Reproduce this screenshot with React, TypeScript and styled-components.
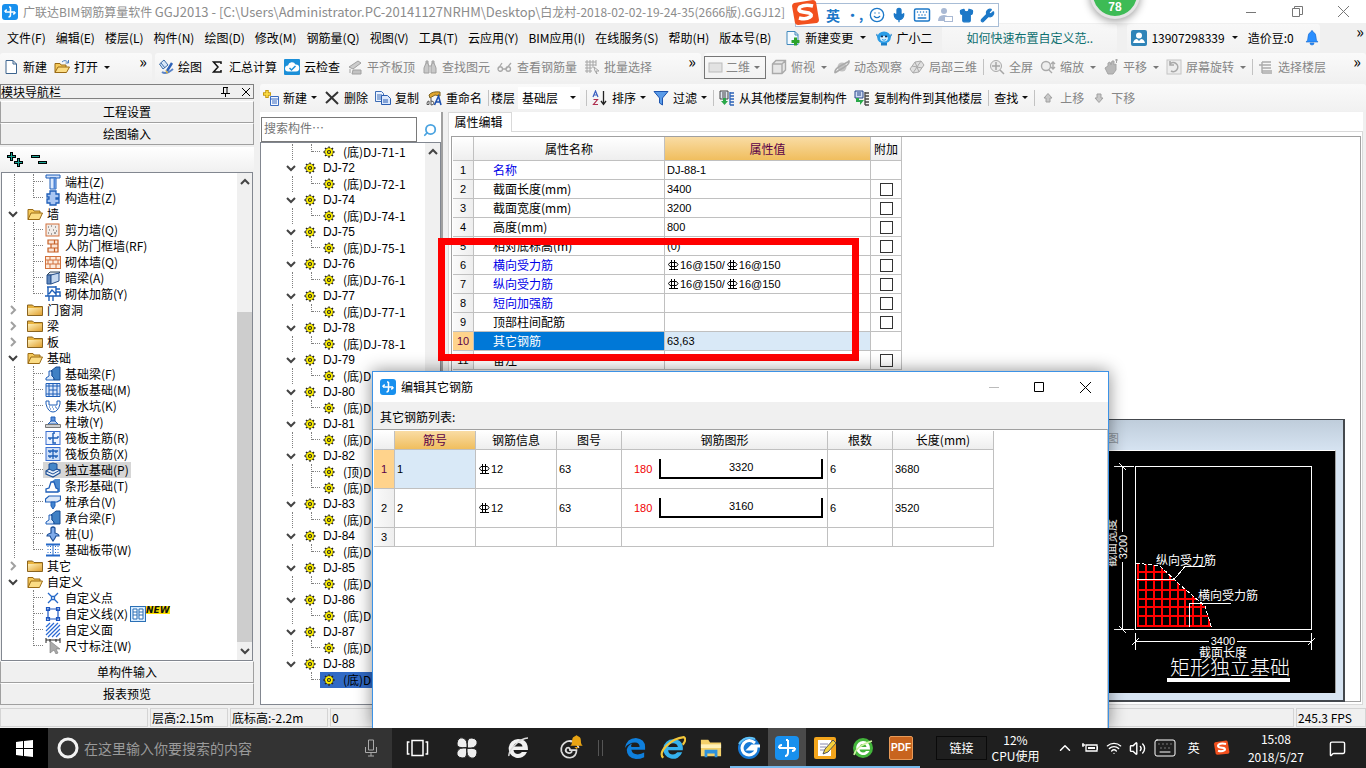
import React from "react";
import styled, { createGlobalStyle, css } from "styled-components";
import { Smile, Mic, Keyboard, Shirt, Wrench, Wifi, Volume2, MessageSquare, ChevronUp, Search } from "lucide-react";

const ui = `"Noto Sans CJK SC", sans-serif`;
const latin = `"Liberation Sans", "Noto Sans CJK SC", sans-serif`;

const GlobalStyle = createGlobalStyle`
  * { box-sizing: border-box; }
  body { margin: 0; background: #f0f0f0; font: 12px/16px ${ui}; color: #000; overflow: hidden; }
  button, input, select { font: inherit; color: inherit; margin: 0; padding: 0; border: 0; background: none; border-radius: 0; }
  svg { display: block; flex: none; }
`;

/* ---------- icons ---------- */

const B = "#1f5fb8";
const glyphs: Record<string, React.ReactNode> = {
  app: (<><rect width="16" height="16" rx="3" fill="#1890ee" /><path d="M8.5 3v7.5q0 2.5-2 2.5M3 8h10M8.5 3H7M3 8q0-2 2-2M13 8q0 2-2 2" fill="none" stroke="#fff" strokeWidth="1.5" /></>),
  page: <path d="M3 1.5h7l3.5 3.5v9.5H3zM10 1.5V5h3.5" fill="#fff" stroke="#3d648f" />,
  folderOpen: (<><path d="M1 13.5V3.5h5l1 1.5h6v2" fill="#f5c95a" stroke="#9a6a14" /><path d="M1 13.5 4 7h11.5l-3 6.5z" fill="#fbdc84" stroke="#9a6a14" /></>),
  folderArrow: (<><path d="M1 13.5V4.5h5l1 1.5h5v2" fill="#f5c95a" stroke="#9a6a14" /><path d="M1 13.5 4 8h11.5l-3 5.5z" fill="#fbdc84" stroke="#9a6a14" /><path d="M8 3q3-3 6 .5M14.5 1v3h-3" fill="none" stroke="#4a7ec0" /></>),
  folder: (<><path d="M.5 13.5V3h5l1.5 1.5h8.5v9z" fill="#e8b23c" stroke="#8a6420" /><path d="M1 6h14v7H1z" fill="url(#fold)" /></>),
  paint: (<><path d="M1.5 5 6 1l4 5-5 4z" fill="#d7e6f8" stroke="#3b6ba8" /><path d="m3 4 4 5" stroke="#3b6ba8" /><path d="m14 4-5 8" stroke="#2d62b8" strokeWidth="2.5" /><path d="M4 13q4 3 11-3" stroke="#5a84c8" strokeWidth="2" fill="none" /><path d="m7 11 3 2-1 2z" fill="#e5b22c" /></>),
  sigma: <path d="M12 5V3H4.5L9 8l-4.5 5H12v-2" fill="none" stroke="#111" strokeWidth="1.5" />,
  cloudCheck: (<><rect width="16" height="16" rx="1" fill="#1b8fd8" /><path d="M4 12.5a3 3 0 0 1 0-6 4 4 0 0 1 7.5-1A3.5 3.5 0 0 1 12 12.5z" fill="#fff" /><path d="m5.5 9 2 2 4-4" fill="none" stroke="#1b8fd8" strokeWidth="1.5" /></>),
  align: (<><path d="m2 8 9-6 3 2-8 6z" fill="#ccc" stroke="#a0a0a0" /><path d="M3 10v4M6 11h8v4H5z" fill="#c2c2c2" stroke="#a0a0a0" /></>),
  binoculars: <path d="M2 14V9l2-5h2l1 4v6zM9 14V8l1-4h2l2 5v5zM7 7h2M4 4V2h2v2M10 4V2h2v2" fill="#c8c8c8" stroke="#a0a0a0" />,
  glasses: <path d="M1 10 5 4M9 10l5-6M1 10a2.2 2.2 0 1 0 4.5 0 2.2 2.2 0 1 0-4.5 0M9 10a2.2 2.2 0 1 0 4.5 0 2.2 2.2 0 1 0-4.5 0M5.5 10H9" fill="none" stroke="#a8a8a8" strokeWidth="1.3" />,
  batch: <path d="M1 3h11M1 6h11M1 9h7M1 12h7M3 1v13M6 1v13M9 1v8M12 1v6m-2 1 5 4-3 0 1 3-2-3z" fill="none" stroke="#a5a5a5" />,
  rect2d: <rect x="1" y="4" width="13" height="9" fill="#e2e2e2" stroke="#bbb" />,
  cube: <path d="M1.5 5 5 1.5h9.5V11L11 14.5H1.5zM1.5 5H11v9.5M11 5l3.5-3.5" fill="#e6e6e6" stroke="#aaa" strokeWidth="1.4" />,
  orbit: (<><circle cx="8" cy="8" r="4.5" fill="#c2c2c2" /><path d="M1 14Q0 10 8 6t7-4q1 3-6 7t-8 5" fill="none" stroke="#aaa" strokeWidth="1.5" /></>),
  local3d: <path d="m1 10 5-7 6-1 3 4-5 7-6 1zM6 3l4 10M3 7l10 2M12 2 4 14" fill="#e0e0e0" stroke="#aaa" />,
  fit: <><circle cx="7" cy="7" r="5.5" fill="#ececec" stroke="#aaa" /><path d="M7 3v8M3 7h8M11 11l4 4" stroke="#a5a5a5" strokeWidth="1.5" /></>,
  zoomDrag: <><circle cx="6" cy="7" r="4.5" fill="#eee" stroke="#aaa" strokeWidth="1.4" /><path d="m9 11 3 3M13 3v7M11 5l2-2 2 2M11 8l2 2 2-2" fill="none" stroke="#aaa" strokeWidth="1.4" /></>,
  hand: <path d="m2 9 3-2v-3l2-1 1 3 1-4h2v4l2-1v6l-3 4H5zM12 1h3M13.5 0v4" fill="#b8b8b8" stroke="#a5a5a5" />,
  rotate: <><rect x="1" y="1" width="14" height="14" fill="#ededed" stroke="#c4c4c4" /><path d="M4 5a4.5 4.5 0 1 1 1 7M4 2v4h4" fill="none" stroke="#a8a8a8" strokeWidth="1.6" /></>,
  floors: <path d="M4 3h9M1 6h12M4 9h9M4 12h10M4 14h10M4 3v11" fill="none" stroke="#aaa" strokeWidth="1.4" />,
  changeDoc: (<><path d="M2 1.5h8l3 3v10H2zM10 1.5V5h3" fill="#f4faff" stroke="#4189bd" /><path d="M10.5 7.5v8M6.5 11.5h8" stroke="#2ba32b" strokeWidth="3" /></>),
  mascot: (<><path d="M1 3.5 0 5l3 4zM15 3.5 16 5l-3 4z" fill="#1c7fc8" /><ellipse cx="8" cy="7.5" rx="6.8" ry="6" fill="#2a9ce6" /><path d="M4 7.5q4-3 8 0 0 4-4 4t-4-4" fill="#d8f0ff" /><circle cx="6" cy="6.5" r="1" fill="#124" /><circle cx="10" cy="6.5" r="1" fill="#124" /><path d="M6 9.5q2 1.5 4 0" stroke="#2a9ce6" fill="none" /><path d="M5 13v2.5h6V13" fill="#1c7fc8" /></>),
  account: (<><rect width="16" height="16" rx="2" fill="#2f84b8" /><circle cx="8" cy="5.5" r="3" fill="#fff" /><path d="M2 13q1-4 4-4l2 2 2-2q3 0 4 4z" fill="#fff" /></>),
  bell: <path d="M2 12q2-1 2-5 0-4 3-5 0-1.5 1-1.5t1 1.5q3 1 3 5 0 4 2 5zM6 13h4q0 2-2 2t-2-2" fill="#2b8fff" stroke="#1668cc" strokeWidth=".6" />,
  addItem: (<><path d="M4 0v8M0 4h8" stroke="#c79a10" strokeWidth="3.5" /><path d="M4 1v6M1 4h6" stroke="#ffe14a" strokeWidth="1.5" /><path d="M7.5 6.5h8v9h-8zM7.5 9h8M9 11h5M9 13h5" fill="#f2f7ff" stroke="#3a6bc0" /></>),
  cross: <path d="m2 2 12 12M14 2 2 13" stroke="#333" strokeWidth="2" />,
  copy: <><path d="M.5 1.5h6l2 2v8h-8zM2 5h5M2 7h5M2 9h4" fill="#eaf2ff" stroke="#3d6db5" /><path d="M6.5 5.5h6l3 3v6h-9zM8 10h5M8 12h5" fill="#dbe8fc" stroke="#2a5db0" /></>,
  rename: (<><path d="M3 5q3-4 11-3v4l-5-1-5 3z" fill="#e0a52e" stroke="#7d6320" /><path d="M1 13.5q0-2.5 2-2.5v3.5H1zM5 8v7q3 0 3-2t-3-2" fill="none" stroke="#555" /><path d="m8.5 15 4-9 2.5 9M10 12h4" fill="none" stroke="#1f52b0" strokeWidth="1.6" /></>),
  sort: (<><path d="m1 7 2.5-6L6 7M2 5h3" fill="none" stroke="#3a5fc0" strokeWidth="1.2" /><path d="M1.5 9.5h4l-4 5h4.5" fill="none" stroke="#b03050" strokeWidth="1.2" /><path d="M11.5 1v13M9 11l2.5 3.5L14 11" fill="none" stroke="#222" strokeWidth="1.3" /></>),
  filter: <path d="M1 1.5h14L9.5 8v7l-3-2V8z" fill="#5a9be8" stroke="#1d54ae" />,
  copyFrom: (<><path d="M1 1h8v8H1zM3 3h4M3 5h4M3 7h4" fill="#dfe7f2" stroke="#444" /><path d="M4 8v3H2l3.5 4L9 11H7V8" fill="#2aa84a" /><path d="M11 3h4M11 6h4M11 9h4M11 12h4M11 15h4M11 2v13" stroke="#2c63b8" strokeWidth="1.3" /></>),
  copyTo: (<><path d="M1 1h8v7H1zM3 3h4M3 5h4" fill="#cfdcf4" stroke="#26448c" /><path d="M2 8v4h4v3l4-5H5V8" fill="#2aa84a" /><path d="M11 3h4M11 6h4M11 9h4M11 12h4M11 15h4M11 2v13" stroke="#444" strokeWidth="1.3" /></>),
  up: <path d="M8 3.5 12 8H10v4H6V8H4z" fill="#c8c8c8" stroke="#a0a0a0" />,
  down: <path d="M8 12.5 12 8H10V4H6v4H4z" fill="#c8c8c8" stroke="#a0a0a0" />,
  column: <><path d="M1 1h14v3H1z" fill="#cfe0fa" stroke={B} /><path d="M5 4h6v11H5z" fill="#dbe8fb" stroke={B} /><path d="M9.5 4v11" stroke="#4f86d8" strokeWidth="2" /></>,
  colBuild: <path d="M5 1h6v3h3v4h-3v1h3v4h-3v2H5v-2H2V9h2V7H2V4h3z" fill="#a9c6f2" stroke={B} strokeWidth="1.3" />,
  shear: <><rect x="1" y="2" width="13" height="12" fill="#f1ece8" stroke="#d1713c" /><path d="M3 5h1M6 4h1M10 5h1M4 8h1M8 8h1M11 9h1M3 11h1M6 12h1M9 11h2" stroke="#555" /></>,
  ibeam: <path d="M3 2h10v12H3v-4h3V6H3zM6 6h7M6 10h7M9.5 2v4M9.5 10v4" fill="#fbe5d6" stroke="#c65f25" strokeWidth="1.2" />,
  brick: <><rect x=".5" y="2.5" width="15" height="12" fill="#fdebdc" stroke="#d1713c" /><path d="M1 6h14M1 10h14M5 2.5V6M11 2.5V6M8 6v4M3 6v4M13 6v4M5 10v4M11 10v4" stroke="#d1713c" /></>,
  darkBeam: <><path d="M2 5 5 2h10l-3 3z" fill="#dfe7f0" stroke="#345" /><path d="M2 5h4v9H2z" fill="#5f87bd" stroke="#27508c" /><path d="m6 5 8-2v8l-8 3z" fill="#c6d9f0" stroke="#27508c" /></>,
  brickRebar: <path d="M2 1h9M0 10h16M3 1v9M11 0v10M15 3h-4M4 10v5M8 10v5M4 8l3-4 4 4M11 6h4v4" fill="none" stroke={B} strokeWidth="1.4" />,
  beam: <><path d="M1 14v-2l3-2V5h3v5l2 2v2z" fill="#dbe9fb" stroke={B} /><path d="M6 5 11 1h4v13h-6v-2L7 10V5z" fill="#3f80c4" stroke="#164d93" /></>,
  raft: <path d="M1 1.5h14v13H1zM4 4h8v8H4zM1 4h3M1 12h3M12 4h3M12 12h3M4 1v3M8 1v3M12 1v3M4 12v3M8 12v3M12 12v3M8 4v8M4 8h8" fill="#dce8fb" stroke={B} />,
  pit: <><path d="M1 3h3v4h8V3h3M1 3v3q2 8 7 8t7-8V3" fill="none" stroke={B} /><path d="M4 9h1M7 9h1M10 9h1M5 11h1M8 11h1M11 10h1" stroke={B} /></>,
  pier: <><path d="M6 3h4v5H6z" fill="#5b90dc" stroke={B} /><path d="M3 10 6 7h4l3 3z" fill="#c9d9f0" stroke={B} /><path d="M.5 10.5h15v3H.5z" fill="#d0d0d0" stroke="#777" /></>,
  mainBar: <><rect x="1" y="1.5" width="14" height="13" fill="#eef4ff" stroke="#3a6fd0" /><path d="M3 8h10M8 3v10h3M5 10V8M8 3h2M13 6v2" fill="none" stroke={B} strokeWidth="1.4" /></>,
  negBar: <><rect x="1" y="1.5" width="14" height="13" fill="#cfdff7" stroke="#3a6fd0" /><path d="M3 5h10M3 10h10M8 3v10M5 5v2M11 5v2M5 10v2M11 10v2" stroke={B} strokeWidth="1.3" /></>,
  isolated: <><path d="m1 9 5-3 9 2v3l-7 4-7-3z" fill="#e4edf9" stroke="#1d4f96" strokeWidth="1.2" /><path d="M4 2l4-1 4 1v5l-4 2-4-2z" fill="#4586c8" stroke="#1d4f96" /><path d="m1 9 7 3 7-4" fill="none" stroke="#1d4f96" /></>,
  strip: <><path d="M6 4 10 1h5v13h-3l-2-6z" fill="#4b8ad0" /><path d="M1 14v-3l3-1 2-6h3l2 6 2 1v3z" fill="#fff" stroke={B} strokeWidth="1.3" /></>,
  cap: <><path d="M.5 5 4 2h11.5v4L12 8H.5z" fill="#dce8f8" stroke={B} strokeWidth="1.2" /><path d="M6 8h4v4l-2 3-2-3z" fill="#4586d0" stroke={B} /></>,
  pile: <path d="M6 2q2-2 4 0v5q4 1 4 3H11l-1 2-2 3-2-3-1-2H2q0-2 4-3z" fill="#7fabea" stroke="#1d4f96" strokeWidth="1.2" />,
  band: <><path d="M1 2.5h14M1 13.5h14" stroke="#2468c8" strokeWidth="2" /><path d="M3 4v9M13 4v9M5.5 4v9M10.5 4v9" stroke="#2468c8" strokeDasharray="1 2" /><path d="M8 3v10" stroke="#2468c8" /></>,
  point: <path d="m3 3 3.5 3.5M13 3 9.5 6.5M3 13l3.5-3.5M13 13 9.5 9.5M6.5 6.5h3v3h-3z" fill="none" stroke="#2468c8" strokeWidth="1.3" />,
  line: <path d="M3 3h10v10H3zM1.5 1.5h3v3h-3zM11.5 1.5h3v3h-3zM1.5 11.5h3v3h-3zM11.5 11.5h3v3h-3z" fill="#fff" stroke="#1d56c0" strokeWidth="1.2" />,
  hatch: <path d="M1 5 5 1M1 9l8-8M1 13 13 1M3 15 15 3M7 15l8-8M11 15l4-4" stroke="#2a6ad4" strokeWidth="1.2" />,
  dim: <><path d="M1 0v5M15 0v5M1 2h14M5 1v3M11 1v3" stroke="#222" /><path d="m5 3 10 8-4 0 2 4-2 1-2-4-4 3z" fill="#aaa" stroke="#777" strokeWidth=".6" /></>,
  cell: <><rect x=".5" y=".5" width="15" height="15" fill="#d8ecff" stroke="#2a6fb5" /><path d="M3 3h4v10H3zM9 3h4v10H9zM3 6h4M3 9h4M9 6h4M9 9h4" fill="#fff" stroke="#2a6fb5" /></>,
  gear: <><path d="M8 .5v15M.5 8h15M2.7 2.7l10.6 10.6M13.3 2.7 2.7 13.3" stroke="#222" strokeWidth="2" /><circle cx="8" cy="8" r="5.6" fill="#fff200" stroke="#222" strokeWidth="1.2" strokeDasharray="2.4 1.2" /><circle cx="8" cy="8" r="2" fill="#fff200" stroke="#222" strokeWidth="1.5" /></>,
  sogou: <><path d="m2 4 19-3q2 0 3 2l3 18q0 2-2 3L6 26q-2 0-3-2L0 7q0-2 2-3" fill="#f2501e" /><path d="M21 7q-8-2-13 1-3 4 3 5l6 1q4 2 1 4-4 3-11 1" fill="none" stroke="#fff" strokeWidth="3.6" /></>,
  edge: <path d="M1 12Q3 1 13 1q10 1 10 10v3H8q1 5 7 5 4 0 7-2v5q-4 2-9 2Q3 23 3 14q1-5 6-7-2 2-1 4h9q0-5-5-5Q5 6 1 12" fill="#0f7fdc" />,
  ie: <><path d="M12 4a9 9 0 1 0 8.5 12H16q-2 2-4 2-4 0-4.5-4H21Q22 4 12 4M7.5 11q.5-3.500 4.5-3.5T16.5 11z" fill="#35b2ee" /><path d="M3 21Q-1 17 6 10T22 2q3 2-1 7" fill="none" stroke="#f2c63a" strokeWidth="2" /></>,
  whiteE: <><path d="M12 3a9.5 9.5 0 1 0 9 13h-5q-2 2-4 2-4 0-4.5-4H22Q22 3 12 3M7.5 10.5q.5-3.5 4.5-3.5t4.5 3.5z" fill="#f2f2f2" /><path d="M3 20Q2 16 9 9t13-7" fill="none" stroke="#ddd" strokeWidth="1.5" /></>,
  greenE: <><circle cx="12" cy="12" r="10" fill="#43b53b" /><path d="M12 5a7 7 0 1 0 6.5 10H15q-1 1.5-3 1.5-3 0-3.5-3H19Q19 5 12 5M8.5 11q.5-3 3.5-3t3.5 3z" fill="#fff" /><path d="M3 19Q5 10 21 5" fill="none" stroke="#cdf3a0" strokeWidth="1.5" /></>,
  fan: <g fill="#eee"><path d="M12 11.5Q1 13 2 7t6-5q5 2 4 9.5M12.5 12Q11 1 17 2t5 6q-2 5-9.5 4M12 12.5q11-1.5 10 4.5t-6 5q-5-2-4-9.5M11.5 12q1.5 11-4.5 10t-5-6q2-5 9.5-4" stroke="#222" /></g>,
  swirl: <><path d="M18 9Q15 4 9 6q-6 3-5 9 2 6 8 6 6-1 6-7h-6q0-3-3-2-2 2 0 4 3 2 5-1M12 6q6 0 8 6" fill="none" stroke="#ddd" strokeWidth="1.6" /><path d="M12 10q2-1 2-5 0-3 3-4 1-1.5 2 0 3 1 3 4 0 4 2 5zM16 11h4l-2 2z" fill="#e9a413" /></>,
  explorer: <><path d="M1 3h8l2 3h12v15H1z" fill="#f3d06a" /><path d="M1 8h22v4H1z" fill="#fff1b8" /><path d="M5 14h14v8h-3v-4H8v4H5z" fill="#2f92dc" /></>,
  gBrowser: <><circle cx="12" cy="12" r="11" fill="#1779d6" /><path d="M18 7Q12 2 7 7q-4 5 0 10 5 4 10 0 2-2 2-4h-7l3-3h8" fill="none" stroke="#fff" strokeWidth="3" /><path d="M2 8Q8-1 18 3" fill="none" stroke="#5fc1f5" strokeWidth="2" /></>,
  ggj: <><rect width="24" height="24" rx="4" fill="#1890ee" /><path d="M13 4v12q0 4-3 4M4 12h16M4 12q0-3 3-3M20 12q0 3-3 3M13 4h-2" fill="none" stroke="#fff" strokeWidth="2" /></>,
  note: <><rect x="1" y="1" width="22" height="22" rx="2" fill="#f3a51c" /><path d="M5 4h13v16H5z" fill="#fff" /><path d="M7 8h8M7 11h6M7 14h4" stroke="#88a" /><path d="m10 18 2-5 8-9 3 3-8 9z" fill="#f5d23c" stroke="#555" /></>,
  winLogo: <path d="m0 2 7-1v7H0zM8 1l9-1v8H8zM0 9h7v7l-7-1zM8 9h9v8l-9-1z" fill="#fff" />,
  taskView: <path d="M6 3.5h11v15H6zM3.5 5h-2v12h2M19.5 5h2v12h-2" fill="none" stroke="#fff" strokeWidth="1.5" />,
  battery: <><path d="M4 5h11v6H4zM15 7h1v2h-1M1 3v4M0 5h3" fill="none" stroke="#fff" strokeWidth="1.3" /><path d="M6 7h7v2H6z" fill="#fff" /></>,
  person: <><circle cx="7" cy="4" r="3" fill="#a9b9d4" /><path d="M1 14q0-6 6-6 3 0 4 2v4z" fill="#a9b9d4" /><rect x="7.5" y="9.5" width="8" height="5" fill="#fff" stroke="#a9b9d4" /></>,
  rebar: <path d="M3 3.5h6.5L11 5.5 9.5 7.5H3L1.5 5.5zM4.5 1v9M7.5 1v9M2 10.5h9" fill="none" stroke="#000" />,
};

function Icon({ name, size = 16, box = 16 }: { name: string; size?: number; box?: number }) {
  return <svg width={size} height={size} viewBox={`0 0 ${box} ${box}`} aria-hidden="true">{glyphs[name]}</svg>;
}

function Chevron({ dir, color = "#444" }: { dir: "down" | "right" | "up"; color?: string }) {
  const d = { down: "M1 3l4 4 4-4", right: "M3 1l4 4-4 4", up: "M1 7l4-4 4 4" }[dir];
  return <svg width="10" height="10" viewBox="0 0 10 10" aria-hidden="true"><path d={d} fill="none" stroke={color} strokeWidth="2" /></svg>;
}

const Caret = styled.i<{ $dim?: boolean }>`
  border: 3px solid transparent; border-top-color: ${(p) => (p.$dim ? "#777" : "#111")}; border-bottom: 0;
`;

/* ---------- window frame ---------- */

const Page = styled.div`
  position: relative; display: flex; flex-direction: column; height: 100vh; min-height: 600px; overflow: hidden;
`;
const TitleBar = styled.header`
  display: flex; align-items: center; height: 23px; padding-left: 2px; gap: 5px; background: #fff; color: #8c8c8c; flex: none; white-space: nowrap;
`;
const TitleText = styled.h1`
  margin: 0; font: 12px/16px ${ui}; flex: 1;
`;
const Path = styled.span`
  font-size: 13px;
`;
const Controls = styled.div`
  display: flex; height: 100%;
`;
const ControlButton = styled.button<{ $w: number }>`
  width: ${(p) => p.$w}px; display: flex; align-items: center; justify-content: center;
`;
const MenuBar = styled.nav`
  display: flex; align-items: center; height: 29px; padding-left: 7px; gap: 10px; flex: none; white-space: nowrap;
`;
const MenuItem = styled.button<{ $lead?: boolean }>`
  display: flex; align-items: center; gap: 4px; margin-left: ${(p) => (p.$lead ? 4 : 0)}px;
  i { margin-left: 3px; }
`;
const MenuGroup = styled.div<{ $pad: number }>`
  display: flex; align-items: center; gap: 10px; height: 28px; padding-left: ${(p) => p.$pad}px;
  background: linear-gradient(#f8f8f8, #f2f2f2); border-radius: 3px;
`;
const Tip = styled.a`
  color: #0f7070; text-decoration: none; width: 151px;
`;
const More = styled.button`
  margin-left: auto; align-self: flex-start; font-size: 16px; line-height: 16px; padding: 0 2px;
`;

const ToolRow = styled.div<{ $flush?: boolean }>`
  display: flex; height: ${(p) => (p.$flush ? 27 : 28)}px; margin: ${(p) => (p.$flush ? 0 : 1)}px 0; gap: 3px; flex: none; white-space: nowrap;
`;
const ToolBar = styled.div<{ $w?: number }>`
  display: flex; align-items: center; height: 100%; gap: 7px; padding: 0 3px; border-radius: 3px;
  background: linear-gradient(#fafafa, #f1f1f1);
  ${(p) => (p.$w ? css`width: ${p.$w}px;` : css`flex: 1;`)}
`;
const ToolButton = styled.button<{ $dim?: boolean; $boxed?: boolean; $tight?: boolean }>`
  display: flex; align-items: center; gap: 4px; color: ${(p) => (p.$dim ? "#868686" : "#000")};
  ${(p) => p.$boxed && css`border: 1px solid #767676; height: 23px; width: 62px; padding: 0 3px; margin-left: -3px; margin-right: -2px; gap: 2px;`}
  i { margin-left: ${(p) => (p.$tight ? 0 : 2)}px; }
`;
const Separator = styled.span`
  width: 1px; height: 16px; background: #c2c2c2; margin: 0 -2px 0 -1px;
`;

type ToolProps = { icon?: string; label: string; dim?: boolean; menu?: boolean; boxed?: boolean; tight?: boolean };
function Tool({ icon, label, dim, menu, boxed, tight }: ToolProps) {
  return (
    <ToolButton type="button" $dim={dim} $boxed={boxed} $tight={tight}>
      {icon && <Icon name={icon} />}
      <span>{label}</span>
      {menu && <Caret $dim={dim} />}
    </ToolButton>
  );
}

/* ---------- left panel ---------- */

const Main = styled.main`
  flex: 1; min-height: 0; display: flex; gap: 6px; padding-top: 2px;
`;
const NavPanel = styled.aside`
  width: 254px; flex: none; display: flex; flex-direction: column; padding-bottom: 1px;
`;
const NavHeader = styled.div`
  display: flex; align-items: center; height: 15px; border: 1px solid #808080; gap: 12px; padding-right: 3px; margin-bottom: 2px;
  span { flex: 1; }
`;
const NavButton = styled.button`
  height: 22px; border: 1px solid #a0a0a0; border-top-color: #fff; background: #f0f0f0;
`;
const NavTools = styled.div`
  height: 25px; margin-top: 2px; padding: 0 7px; display: flex; gap: 8px; align-items: center; background: linear-gradient(#fff, #f0f0f0);
`;
const TreeBox = styled.div`
  flex: 1; min-height: 0; display: flex; border: 1px solid #828790; background: #fff; overflow: hidden; margin: 0 1px;
`;
const TreeList = styled.ul`
  flex: 1; margin: 0; padding: 1px 0 0; list-style: none; white-space: nowrap; overflow: hidden;
`;
const TreeRow = styled.li`
  display: flex; align-items: center; height: 16px; line-height: 16px;
`;
const Guide = styled.span<{ $w: number; $on?: boolean; $end?: boolean }>`
  width: ${(p) => p.$w}px; flex: none; height: ${(p) => (p.$end ? 8 : 16)}px; align-self: flex-start;
  border-right: 1px ${(p) => (p.$on ? "dotted #808080" : "solid transparent")};
`;
const Elbow = styled.span<{ $w: number }>`
  width: ${(p) => p.$w}px; flex: none; height: 8px; align-self: flex-start; border-bottom: 1px dotted #808080;
`;
const Toggle = styled.button<{ $pad?: number }>`
  width: ${(p) => 23 + (p.$pad || 0)}px; padding-left: ${(p) => (p.$pad || 0) + 6}px; flex: none;
`;
const Leaf = styled.span<{ $bg?: string }>`
  display: flex; align-items: center; gap: 4px; height: 16px; padding: 0 2px; background: ${(p) => p.$bg || "none"};
`;
const NewMark = styled.b`
  color: #111; background: #ffe000; font: italic 700 9px/8px "DejaVu Sans", sans-serif; align-self: flex-start;
`;
const Track = styled.div`
  width: 15px; flex: none; display: flex; flex-direction: column; background: #f0f0f0;
`;
const TrackEnd = styled.button`
  height: 18px; display: flex; align-items: center; justify-content: center;
`;
const TrackPart = styled.div<{ $grow: number; $thumb?: boolean }>`
  flex: ${(p) => p.$grow}; background: ${(p) => (p.$thumb ? "#cdcdcd" : "none")};
`;

type Node = { label: string; icon?: string; open?: boolean; leaf?: boolean; end?: boolean; rail?: boolean; picked?: boolean; fresh?: boolean };
const leaf = (label: string, icon: string, more: Partial<Node> = {}): Node => ({ label, icon, leaf: true, rail: true, ...more });
const navNodes: Node[] = [
  leaf("端柱(Z)", "column"), leaf("构造柱(Z)", "colBuild", { end: true }),
  { label: "墙", open: true },
  leaf("剪力墙(Q)", "shear"), leaf("人防门框墙(RF)", "ibeam"), leaf("砌体墙(Q)", "brick"), leaf("暗梁(A)", "darkBeam"), leaf("砌体加筋(Y)", "brickRebar", { end: true }),
  { label: "门窗洞" }, { label: "梁" }, { label: "板" }, { label: "基础", open: true },
  leaf("基础梁(F)", "beam"), leaf("筏板基础(M)", "raft"), leaf("集水坑(K)", "pit"), leaf("柱墩(Y)", "pier"), leaf("筏板主筋(R)", "mainBar"), leaf("筏板负筋(X)", "negBar"),
  leaf("独立基础(P)", "isolated", { picked: true }), leaf("条形基础(T)", "strip"), leaf("桩承台(V)", "cap"), leaf("承台梁(F)", "beam"), leaf("桩(U)", "pile"), leaf("基础板带(W)", "band", { end: true }),
  { label: "其它" }, { label: "自定义", open: true },
  leaf("自定义点", "point", { rail: false }), leaf("自定义线(X)", "line", { rail: false, fresh: true }), leaf("自定义面", "hatch", { rail: false }), leaf("尺寸标注(W)", "dim", { rail: false, end: true }),
];

function NavTree() {
  return (
    <TreeList>
      {navNodes.map((n) =>
        n.leaf ? (
          <TreeRow key={n.label}>
            <Guide $w={13} $on={n.rail} />
            <Guide $w={19} $on $end={n.end} />
            <Elbow $w={9} />
            <Leaf $bg={n.picked ? "#d6d6d6" : undefined}>
              <Icon name={n.icon!} />
              <span>{n.label}</span>
            </Leaf>
            {n.fresh && <><Icon name="cell" /><NewMark>NEW</NewMark></>}
          </TreeRow>
        ) : (
          <TreeRow key={n.label}>
            <Toggle type="button" aria-label={n.label}><Chevron dir={n.open ? "down" : "right"} color={n.open ? "#404040" : "#a0a0a0"} /></Toggle>
            <Leaf><Icon name={n.open ? "folderOpen" : "folder"} /><span>{n.label}</span></Leaf>
          </TreeRow>
        )
      )}
    </TreeList>
  );
}

/* ---------- component list ---------- */

const Work = styled.div`
  flex: 1; min-width: 0; display: flex; flex-direction: column;
`;
const FloorSelect = styled.select`
  appearance: none; width: 62px; height: 22px; background: #fff; padding-left: 4px; margin-left: -4px;
`;
const FloorField = styled.label`
  display: flex; align-items: center; gap: 7px; margin-left: -3px;
  i { margin-left: -17px; margin-right: 4px; }
`;
const Columns = styled.div`
  flex: 1; min-height: 0; display: flex; gap: 5px; padding: 1px 3px 1px 0;
`;
const ListPanel = styled.section`
  width: 183px; flex: none; display: flex; flex-direction: column; background: #fff; border-right: 2px solid #a0a0a0;
`;
const SearchRow = styled.label`
  display: flex; align-items: center; height: 30px; padding: 5px 4px 0 1px; gap: 6px; color: #4aa3e0;
`;
const SearchInput = styled.input`
  flex: 1; min-width: 0; height: 25px; border: 1px solid #7a7a7a; padding: 0 2px 4px; background: #fff; color: #000;
  &::placeholder { color: #757575; opacity: 1; }
`;
const ListBox = styled(TreeBox)`
  margin: 0;
`;
const Item = styled.span<{ $on?: boolean }>`
  display: flex; align-items: center; gap: 8px; height: 16px; flex: ${(p) => (p.$on ? 1 : "none")};
  padding-left: 3px; background: ${(p) => (p.$on ? "#316ac5" : "none")};
`;
const GroupItem = styled(Item)`
  gap: 7px; padding-left: 1px; font-family: ${latin};
`;

const groups: [string, string[]][] = [
  ["DJ-71", ["(底)DJ-71-1"]], ["DJ-72", ["(底)DJ-72-1"]], ["DJ-74", ["(底)DJ-74-1"]], ["DJ-75", ["(底)DJ-75-1"]],
  ["DJ-76", ["(底)DJ-76-1"]], ["DJ-77", ["(底)DJ-77-1"]], ["DJ-78", ["(底)DJ-78-1"]], ["DJ-79", ["(底)D"]],
  ["DJ-80", ["(底)D"]], ["DJ-81", ["(底)D"]], ["DJ-82", ["(顶)D", "(底)D"]], ["DJ-83", ["(底)D"]],
  ["DJ-84", ["(底)D"]], ["DJ-85", ["(底)D"]], ["DJ-86", ["(底)D"]], ["DJ-87", ["(底)D"]], ["DJ-88", ["(底)D"]],
];

function ComponentTree() {
  return (
    <TreeList>
      {groups.map(([g, kids], i) => {
        const last = i === groups.length - 1;
        return (
          <React.Fragment key={g}>
            {i > 0 && (
              <TreeRow>
                <Toggle type="button" $pad={19} aria-label={g}><Chevron dir="down" /></Toggle>
                <GroupItem><Icon name="gear" size={12} /><span>{g}</span></GroupItem>
              </TreeRow>
            )}
            {kids.map((k, j) => (
              <TreeRow key={k}>
                <Guide $w={32} $on={!last} />
                <Guide $w={19} $on $end={j === kids.length - 1} />
                <Elbow $w={8} />
                <Item $on={last}><Icon name="gear" size={12} /><span>{k}</span></Item>
              </TreeRow>
            ))}
          </React.Fragment>
        );
      })}
    </TreeList>
  );
}

/* ---------- property editor ---------- */

const Editor = styled.section`
  position: relative; flex: 1; min-width: 0; display: flex; flex-direction: column;
`;
const TabStrip = styled.div`
  display: flex; height: 20px;
  &::after { content: ""; flex: 1; border-bottom: 1px solid #d9d9d9; background: #fff; }
`;
const Tab = styled.button`
  width: 64px; border: 1px solid #d9d9d9; border-bottom: 0; background: #fff; padding: 0 3px 2px 0;
`;
const TabBody = styled.div`
  flex: 1; background: #fff; border: 1px solid #d9d9d9; border-top: 0; padding: 4px 1px 2px 2px; min-height: 0; display: flex;
`;
const GridBox = styled.div`
  flex: 1; border: 1px solid #a0a0a0; padding: 0 1px; overflow: hidden;
`;
const Grid = styled.table`
  border-collapse: separate; border-spacing: 0; table-layout: fixed;
`;
const cellBase = css`
  border-right: 1px solid #c0c0c0; border-bottom: 1px solid #c0c0c0; font-weight: 400; white-space: nowrap; overflow: hidden;
`;
const Head = styled.th<{ $w: number; $h: number; $hot?: boolean }>`
  ${cellBase} padding: 0; width: ${(p) => p.$w}px; height: ${(p) => p.$h}px;
  color: ${(p) => (p.$hot ? "#5a0048" : "#000")};
  background: ${(p) => (p.$hot ? "linear-gradient(#f9dca4, #f0be5e)" : "linear-gradient(#fff, #eee)")};
`;
const RowHead = styled.th<{ $h: number; $hot?: boolean }>`
  ${cellBase} padding: 0; height: ${(p) => p.$h}px; font: 11px/16px ${latin};
  color: ${(p) => (p.$hot ? "#5a0048" : "#000")}; background: ${(p) => (p.$hot ? "#ffd38c" : "linear-gradient(90deg, #fafafa, #eee)")};
`;
const NameCell = styled.td<{ $link?: boolean; $on?: boolean }>`
  ${cellBase} padding: 0 0 0 19px; line-height: 16px; color: ${(p) => (p.$on ? "#fff" : p.$link ? "#0000e8" : "#000")};
  background: ${(p) => (p.$on ? "#0078d7" : "#fff")};
`;
const ValueCell = styled.td<{ $on?: boolean }>`
  ${cellBase} padding: 0 0 0 2px; font: 11px/16px ${latin}; background: ${(p) => (p.$on ? "#d9e9f7" : "#fff")};
`;
const TickCell = styled.td`
  ${cellBase} padding: 0; text-align: center;
`;
const Tick = styled.input`
  appearance: none; display: block; margin: 0 auto; width: 13px; height: 13px; border: 1px solid #333; background: #fff;
`;
const Bars = styled.span`
  display: flex; align-items: center; gap: 1px;
`;
const Highlight = styled.div`
  position: absolute; left: 438px; top: 238px; width: 421px; height: 123px; border: 7px solid #ff0000; pointer-events: none;
`;

const Rebar = () => <Icon name="rebar" size={12} box={12} />;
const spec = <Bars><Rebar />16@150/<Rebar />16@150</Bars>;
const properties: { name: string; value?: React.ReactNode; link?: boolean; tick?: boolean; on?: boolean }[] = [
  { name: "名称", value: "DJ-88-1", link: true, tick: false },
  { name: "截面长度(mm)", value: "3400" },
  { name: "截面宽度(mm)", value: "3200" },
  { name: "高度(mm)", value: "800" },
  { name: "相对底标高(m)", value: "(0)" },
  { name: "横向受力筋", value: spec, link: true },
  { name: "纵向受力筋", value: spec, link: true },
  { name: "短向加强筋", link: true },
  { name: "顶部柱间配筋" },
  { name: "其它钢筋", value: "63,63", tick: false, on: true },
  { name: "备注" },
];

function PropertyGrid() {
  return (
    <Grid>
      <thead>
        <tr>
          <Head $w={21} $h={24} aria-label="序号" />
          <Head $w={191} $h={24}>属性名称</Head>
          <Head $w={206} $h={24} $hot>属性值</Head>
          <Head $w={31} $h={24}>附加</Head>
        </tr>
      </thead>
      <tbody>
        {properties.map((p, i) => (
          <tr key={p.name}>
            <RowHead $h={19} $hot={p.on} scope="row">{i + 1}</RowHead>
            <NameCell $link={p.link} $on={p.on}>{p.name}</NameCell>
            <ValueCell $on={p.on}>{p.value}</ValueCell>
            <TickCell>{p.tick !== false && <Tick type="checkbox" aria-label={`附加 ${p.name}`} />}</TickCell>
          </tr>
        ))}
      </tbody>
    </Grid>
  );
}

/* ---------- preview window ---------- */

const Preview = styled.section`
  position: absolute; right: 18px; bottom: 3px; width: 270px; height: 283px; border: 2px solid #44484d; border-width: 1px 2px 2px 1px;
  background: linear-gradient(#bfcddb, #d7e4f2 32px); padding: 0 7px 7px 0; display: flex; flex-direction: column;
`;
const PreviewTitle = styled.h2`
  margin: 0; height: 30px; padding: 10px 0 0 31px; font: 12px/16px ${ui}; color: #8c949c;
`;
const Canvas = styled.svg`
  flex: 1; background: #000; border-right: 1px solid #a0a0a0; border-top: 1px solid #fff;
`;
const verticals = [1, 9, 17, 25, 33, 41, 48, 56, 64, 72];
const horizontals = [572, 580, 590, 599, 607, 616, 626];

function Drawing() {
  return (
    <Canvas viewBox="1076 451 259 242" preserveAspectRatio="xMaxYMin meet" role="img" aria-label="矩形独立基础">
      <defs><clipPath id="corner"><path d="M1136 563 1160 566 1180 585 1205 606 1212 629H1136z" /></clipPath></defs>
      <g clipPath="url(#corner)" stroke="#f00" strokeWidth="2">
        {verticals.map((v) => <path key={v} d={`M${1137 + v} 560V627`} />)}
        {horizontals.map((h) => <path key={h} d={`M1137 ${h}H1213`} />)}
      </g>
      <g fill="none" stroke="#fff" shapeRendering="crispEdges">
        <path d="M1135.5 466.5H1311.5V629.5H1135.5z" />
        <path d="M1114 466.5h20M1114 629.5h20M1122.5 466V532M1122.5 562V629M1119 463l7 7M1119 626l7 7" />
        <path d="M1135.5 633v17M1311.5 633v17M1135 641.5H1209M1237 641.5H1312M1132 645l7-7M1308 645l7-7" />
        <path d="M1137 579.5h37l11-13h20M1189.5 627V603.5h41" />
        <path d="M1136 563 1160 566 1180 585 1205 606 1212 629" strokeDasharray="4 2" />
      </g>
      <g fill="#fff" fontSize="12" fontFamily={ui}>
        <text x="1156" y="565">纵向受力筋</text>
        <text x="1198" y="600">横向受力筋</text>
        <text x="1223" y="657" textAnchor="middle">截面长度</text>
        <text transform="translate(1116 543) rotate(-90)" textAnchor="middle">截面宽度</text>
        <text x="1223" y="645" fontSize="11" fontFamily="Liberation Sans" textAnchor="middle">3400</text>
        <text transform="translate(1127 547) rotate(-90)" fontSize="11" fontFamily="Liberation Sans" textAnchor="middle">3200</text>
        <text x="1170" y="675" fontSize="20" fontWeight="300">矩形独立基础</text>
      </g>
      <path d="M1167 678h123v4h-123z" fill="#fff" />
    </Canvas>
  );
}

/* ---------- dialog ---------- */

const Dialog = styled.section`
  position: absolute; left: 372px; top: 371px; bottom: 40px; width: 737px; background: #fff; border: 1px solid #3c92e6; border-bottom: 0;
  box-shadow: 0 0 16px rgba(0, 0, 0, 0.45); display: flex; flex-direction: column;
`;
const DialogTitle = styled.header`
  display: flex; align-items: center; height: 30px; padding-left: 7px; gap: 5px;
  h2 { margin: 0; flex: 1; font: 12px/16px ${ui}; }
`;
const DialogLabel = styled.div`
  height: 27px; background: #f0f0f0; padding: 7px 7px 0;
`;
const DialogBody = styled.div`
  flex: 1; border-top: 1px solid #a0a0a0; border-right: 1px solid #c8c8c8; padding: 1px;
`;
const Text = styled.td<{ $on?: boolean }>`
  ${cellBase} padding: 0 0 0 2px; font: 11px/16px ${latin}; background: ${(p) => (p.$on ? "#d9e9f7" : "#fff")};
`;
const Shape = styled.td`
  ${cellBase} padding: 0 4px 0 12px; font: 11px/16px ${latin};
`;
const Hook = styled.span`
  display: flex; align-items: center; gap: 7px; color: #f00000;
`;
const Stirrup = styled.span`
  flex: 1; height: 20px; border: 2px solid #000; border-top: 0; color: #000; text-align: center;
`;

const columns: [string, number][] = [["筋号", 81], ["钢筋信息", 81], ["图号", 65], ["钢筋图形", 206], ["根数", 65], ["长度(mm)", 101]];
const bars = [["1", "3320", "3680"], ["2", "3160", "3520"]];

function RebarDialog() {
  return (
    <Dialog role="dialog" aria-label="编辑其它钢筋">
      <DialogTitle>
        <Icon name="app" />
        <h2>编辑其它钢筋</h2>
        <Controls>
          <ControlButton type="button" $w={44} aria-label="最小化"><svg width="10" height="10"><path d="M0 5.5h10" stroke="#bbb" /></svg></ControlButton>
          <ControlButton type="button" $w={46} aria-label="最大化"><svg width="10" height="10"><path d="M.5.5h9v9h-9z" fill="none" stroke="#000" /></svg></ControlButton>
          <ControlButton type="button" $w={46} aria-label="关闭"><svg width="11" height="11"><path d="m0 0 11 11M11 0 0 11" stroke="#000" /></svg></ControlButton>
        </Controls>
      </DialogTitle>
      <DialogLabel>其它钢筋列表:</DialogLabel>
      <DialogBody>
        <Grid>
          <thead>
            <tr>
              <Head $w={21} $h={19} aria-label="序号" />
              {columns.map(([c, w], i) => <Head key={c} $w={w} $h={19} $hot={i === 0}>{c}</Head>)}
            </tr>
          </thead>
          <tbody>
            {bars.map(([n, len, total], i) => (
              <tr key={n}>
                <RowHead $h={39} $hot={i === 0} scope="row">{n}</RowHead>
                <Text $on={i === 0}>{n}</Text>
                <Text><Bars><Rebar />12</Bars></Text>
                <Text>63</Text>
                <Shape><Hook>180<Stirrup>{len}</Stirrup></Hook></Shape>
                <Text>6</Text>
                <Text>{total}</Text>
              </tr>
            ))}
            <tr>
              <RowHead $h={19} scope="row">3</RowHead>
              {columns.map(([c]) => <Text key={c} />)}
            </tr>
          </tbody>
        </Grid>
      </DialogBody>
    </Dialog>
  );
}

/* ---------- floating input bar and badge ---------- */

const InputBar = styled.div`
  position: absolute; left: 795px; top: 3px; width: 204px; height: 24px; display: flex; align-items: center; gap: 6px; padding-left: 30px;
  background: #fff; border: 1px solid #a8bdd6; color: #1c78c8; font-weight: 700; font-size: 14px; white-space: nowrap;
  > svg:first-child { position: absolute; left: -4px; top: -5px; }
`;
const Mark = styled.span`
  font-size: 13px;
`;
const Badge = styled.div`
  position: absolute; left: 1090px; top: -31px; width: 50px; height: 50px; border-radius: 25px; background: #3dbb55; border: 3px solid #e4e4e4;
  box-shadow: 0 2px 8px rgba(0, 0, 0, 0.4); color: #fff; font: 700 12px/16px ${latin}; text-align: center; padding-top: 27px;
`;

/* ---------- bottom bars ---------- */

const StatusBar = styled.footer`
  display: flex; height: 22px; gap: 2px; padding: 2px 0 1px; flex: none;
`;
const StatusCell = styled.div<{ $w?: number }>`
  border: 1px solid #d4d4d4; padding: 0 1px; line-height: 17px;
  ${(p) => (p.$w ? css`width: ${p.$w}px;` : css`flex: 1;`)}
`;
const Taskbar = styled.footer`
  position: relative; display: flex; height: 40px; flex: none; background: #1f1f1f; color: #fff;
`;
const TaskButton = styled.button<{ $w: number; $bg?: string; $run?: boolean }>`
  width: ${(p) => p.$w}px; flex: none; display: flex; align-items: center; justify-content: center; background: ${(p) => p.$bg || "none"};
  border-bottom: 2px solid ${(p) => (p.$run ? "#76b9ed" : "transparent")}; border-top: 2px solid transparent;
`;
const TaskSearch = styled.label`
  width: 344px; flex: none; display: flex; align-items: center; gap: 5px; padding: 0 14px 0 9px; background: #333;
`;
const TaskInput = styled.input`
  flex: 1; min-width: 0; font-size: 14px; line-height: 20px; &::placeholder { color: #9a9a9a; opacity: 1; }
`;
const Divider = styled.span`
  width: 5px; height: 16px; border: 1px solid #555; border-width: 0 1px; margin: 12px 13px 0 3px; flex: none;
`;
const LinkBox = styled.button`
  margin: 8px 0 8px 16px; width: 54px; border: 1px solid #0a0a0a; text-align: center;
`;
const Cpu = styled.div`
  margin-left: auto; margin-right: 8px; text-align: center; line-height: 16px; padding-top: 4px; width: 60px;
`;
const Clock = styled.time`
  width: 68px; margin-left: 8px; text-align: center; line-height: 18px; padding-top: 2px;
`;
const Pdf = styled.span`
  width: 24px; height: 24px; border-radius: 2px; background: #c8641e; border: 1px solid #e89a58; font: 700 10px/22px ${latin}; text-align: center;
`;

const menus = ["文件(F)", "编辑(E)", "楼层(L)", "构件(N)", "绘图(D)", "修改(M)", "钢筋量(Q)", "视图(V)", "工具(T)", "云应用(Y)", "BIM应用(I)", "在线服务(S)", "帮助(H)", "版本号(B)"];

export default function App() {
  return (
    <Page>
      <GlobalStyle />
      <svg width="0" height="0" aria-hidden="true"><linearGradient id="fold" x2="1" y2="1"><stop stopColor="#fff0b8" /><stop offset="1" stopColor="#e0a030" /></linearGradient></svg>
      <TitleBar>
        <Icon name="app" />
        <TitleText>
          广联达BIM钢筋算量软件 <Path>GGJ2013 - [C:\Users\Administrator.PC-20141127NRHM\Desktop\</Path>白龙村-2018-02-02-19-24-35(2666版).GGJ12]
        </TitleText>
        <Controls>
          <ControlButton type="button" $w={46} aria-label="最小化"><svg width="10" height="10"><path d="M0 5.5h10" stroke="#777" /></svg></ControlButton>
          <ControlButton type="button" $w={46} aria-label="还原"><svg width="11" height="11"><path d="M.5 2.5h7v8h-7zM2.5 2.5v-2h8v8h-3" fill="none" stroke="#777" /></svg></ControlButton>
          <ControlButton type="button" $w={46} aria-label="关闭"><svg width="11" height="11"><path d="m0 0 11 11M11 0 0 11" stroke="#777" /></svg></ControlButton>
        </Controls>
      </TitleBar>

      <MenuBar>
        {menus.map((m) => <MenuItem key={m} type="button">{m}</MenuItem>)}
        <MenuItem type="button" $lead><Icon name="changeDoc" />新建变更<Caret /></MenuItem>
        <MenuItem type="button"><Icon name="mascot" />广小二</MenuItem>
        <MenuGroup $pad={24}><Tip href="#">如何快速布置自定义范..</Tip></MenuGroup>
        <MenuGroup $pad={4}>
          <MenuItem type="button"><Icon name="account" />13907298339<Caret /></MenuItem>
          <MenuItem type="button">造价豆:0</MenuItem>
          <Icon name="bell" />
        </MenuGroup>
        <More type="button" aria-label="更多">»</More>
      </MenuBar>

      <ToolRow>
        <ToolBar $w={152}>
          <Tool icon="page" label="新建" />
          <Tool icon="folderArrow" label="打开" menu />
          <More type="button" aria-label="更多">»</More>
        </ToolBar>
        <ToolBar $w={546}>
          <Tool icon="paint" label="绘图" />
          <Tool icon="sigma" label="汇总计算" />
          <Tool icon="cloudCheck" label="云检查" />
          <Tool icon="align" label="平齐板顶" dim />
          <Tool icon="binoculars" label="查找图元" dim />
          <Tool icon="glasses" label="查看钢筋量" dim />
          <Tool icon="batch" label="批量选择" dim />
          <More type="button" aria-label="更多">»</More>
        </ToolBar>
        <ToolBar>
          <Tool icon="rect2d" label="二维" dim menu boxed />
          <Tool icon="cube" label="俯视" dim menu />
          <Tool icon="orbit" label="动态观察" dim />
          <Tool icon="local3d" label="局部三维" dim />
          <Separator />
          <Tool icon="fit" label="全屏" dim />
          <Tool icon="zoomDrag" label="缩放" dim menu />
          <Tool icon="hand" label="平移" dim menu />
          <Tool icon="rotate" label="屏幕旋转" dim menu />
          <Separator />
          <Tool icon="floors" label="选择楼层" dim />
          <More type="button" aria-label="更多">»</More>
        </ToolBar>
      </ToolRow>

      <Main>
        <NavPanel>
          <NavHeader>
            <span>模块导航栏</span>
            <svg width="9" height="10"><path d="M2 .5h5M2.5 0v6M6 0v6M0 6.5h9M4.5 7v3" stroke="#000" fill="none" /></svg>
            <svg width="8" height="8"><path d="m0 0 8 8M8 0 0 8" stroke="#000" /></svg>
          </NavHeader>
          <NavButton type="button">工程设置</NavButton>
          <NavButton type="button">绘图输入</NavButton>
          <NavTools>
            <svg width="16" height="16"><path d="M4.5 0v9M0 4.5h9M11.5 6v9M7 10.5h9" stroke="#000" strokeWidth="3" /><path d="M4.5 1v7M1 4.5h7M11.5 7v7M8 10.5h7" stroke="#1aa394" /></svg>
            <svg width="16" height="16"><path d="M0 4.5h9M7 10.5h9" stroke="#000" strokeWidth="3" /><path d="M1 4.5h7M8 10.5h7" stroke="#1aa394" /></svg>
          </NavTools>
          <TreeBox>
            <NavTree />
            <Track>
              <TrackEnd type="button" aria-label="向上"><Chevron dir="up" /></TrackEnd>
              <TrackPart $grow={120} />
              <TrackPart $grow={329} $thumb />
              <TrackEnd type="button" aria-label="向下"><Chevron dir="down" /></TrackEnd>
            </Track>
          </TreeBox>
          <NavButton type="button">单构件输入</NavButton>
          <NavButton type="button">报表预览</NavButton>
        </NavPanel>

        <Work>
          <ToolRow $flush>
            <ToolBar>
              <Tool icon="addItem" label="新建" menu tight />
              <Tool icon="cross" label="删除" />
              <Tool icon="copy" label="复制" />
              <Tool icon="rename" label="重命名" />
              <Separator />
              <FloorField>
                楼层
                <FloorSelect defaultValue="基础层"><option>基础层</option></FloorSelect>
                <Caret />
              </FloorField>
              <Separator />
              <Tool icon="sort" label="排序" menu tight />
              <Tool icon="filter" label="过滤" menu tight />
              <Separator />
              <Tool icon="copyFrom" label="从其他楼层复制构件" />
              <Tool icon="copyTo" label="复制构件到其他楼层" />
              <Separator />
              <Tool label="查找" menu tight />
              <Separator />
              <Tool icon="up" label="上移" dim />
              <Tool icon="down" label="下移" dim />
            </ToolBar>
          </ToolRow>
          <Columns>
            <ListPanel>
              <SearchRow>
                <SearchInput type="text" placeholder="搜索构件…" aria-label="搜索构件" />
                <Search size={14} strokeWidth={3} transform="scale(-1 1)" />
              </SearchRow>
              <ListBox>
                <ComponentTree />
                <Track>
                  <TrackEnd type="button" aria-label="向上"><Chevron dir="up" /></TrackEnd>
                  <TrackPart $grow={1} />
                </Track>
              </ListBox>
            </ListPanel>
            <Editor>
              <TabStrip><Tab type="button">属性编辑</Tab></TabStrip>
              <TabBody><GridBox><PropertyGrid /></GridBox></TabBody>
              <Preview>
                <PreviewTitle>图</PreviewTitle>
                <Drawing />
              </Preview>
            </Editor>
          </Columns>
        </Work>
      </Main>

      <StatusBar>
        <StatusCell $w={148} />
        <StatusCell $w={78}>层高:2.15m</StatusCell>
        <StatusCell $w={98}>底标高:-2.2m</StatusCell>
        <StatusCell>0</StatusCell>
        <StatusCell $w={70}>245.3 FPS</StatusCell>
      </StatusBar>

      <Highlight />
      <RebarDialog />
      <InputBar>
        <Icon name="sogou" size={28} box={28} />
        <span>英</span>
        <Mark>•,</Mark>
        <Smile size={16} strokeWidth={2} />
        <Mic size={16} fill="currentColor" strokeWidth={2} />
        <Keyboard size={18} strokeWidth={2} />
        <Icon name="person" />
        <Shirt size={15} fill="currentColor" />
        <Wrench size={15} fill="currentColor" />
      </InputBar>
      <Badge>78</Badge>

      <Taskbar>
        <TaskButton type="button" $w={48} $bg="#000" aria-label="开始"><Icon name="winLogo" size={17} box={17} /></TaskButton>
        <TaskSearch>
          <svg width="22" height="22"><circle cx="11" cy="11" r="9" fill="none" stroke="#f2f2f2" strokeWidth="3" /></svg>
          <TaskInput type="text" placeholder="在这里输入你要搜索的内容" aria-label="搜索" />
          <svg width="14" height="18"><path d="M4.5 1h5v10h-5zM1.5 8v5.5h11V8M7 13.5V17M4 17h6" fill="none" stroke="#aaa" /></svg>
        </TaskSearch>
        <TaskButton type="button" $w={50} aria-label="任务视图"><Icon name="taskView" size={23} box={23} /></TaskButton>
        <TaskButton type="button" $w={50} aria-label="应用"><Icon name="fan" size={24} box={24} /></TaskButton>
        <TaskButton type="button" $w={52} aria-label="浏览器"><Icon name="whiteE" size={24} box={24} /></TaskButton>
        <TaskButton type="button" $w={51} aria-label="提醒"><Icon name="swirl" size={26} box={24} /></TaskButton>
        <Divider />
        <TaskButton type="button" $w={38} aria-label="Edge"><Icon name="edge" size={22} box={24} /></TaskButton>
        <TaskButton type="button" $w={38} aria-label="Internet Explorer"><Icon name="ie" size={26} box={24} /></TaskButton>
        <TaskButton type="button" $w={38} aria-label="文件资源管理器"><Icon name="explorer" size={22} box={24} /></TaskButton>
        <TaskButton type="button" $w={38} $run aria-label="广联达"><Icon name="gBrowser" size={24} box={24} /></TaskButton>
        <TaskButton type="button" $w={38} $run $bg="#4a4a4a" aria-label="GGJ2013"><Icon name="ggj" size={24} box={24} /></TaskButton>
        <TaskButton type="button" $w={38} $run aria-label="记事"><Icon name="note" size={24} box={24} /></TaskButton>
        <TaskButton type="button" $w={38} $run aria-label="360浏览器"><Icon name="greenE" size={24} box={24} /></TaskButton>
        <TaskButton type="button" $w={38} $run><Pdf>PDF</Pdf></TaskButton>
        <LinkBox type="button">链接</LinkBox>
        <Cpu>12%<br />CPU使用</Cpu>
        <TaskButton type="button" $w={26} aria-label="显示隐藏的图标"><ChevronUp size={18} /></TaskButton>
        <TaskButton type="button" $w={24} aria-label="电源"><Icon name="battery" /></TaskButton>
        <TaskButton type="button" $w={24} aria-label="网络"><Wifi size={16} /></TaskButton>
        <TaskButton type="button" $w={24} aria-label="音量"><Volume2 size={17} strokeWidth={2} /></TaskButton>
        <TaskButton type="button" $w={30} aria-label="键盘"><Keyboard size={24} strokeWidth={1} /></TaskButton>
        <TaskButton type="button" $w={28}>英</TaskButton>
        <TaskButton type="button" $w={28} aria-label="搜狗输入法"><Icon name="sogou" size={16} box={28} /></TaskButton>
        <Clock>15:08<br />2018/5/27</Clock>
        <TaskButton type="button" $w={58} aria-label="通知"><MessageSquare size={17} strokeWidth={2} /></TaskButton>
      </Taskbar>
    </Page>
  );
}
